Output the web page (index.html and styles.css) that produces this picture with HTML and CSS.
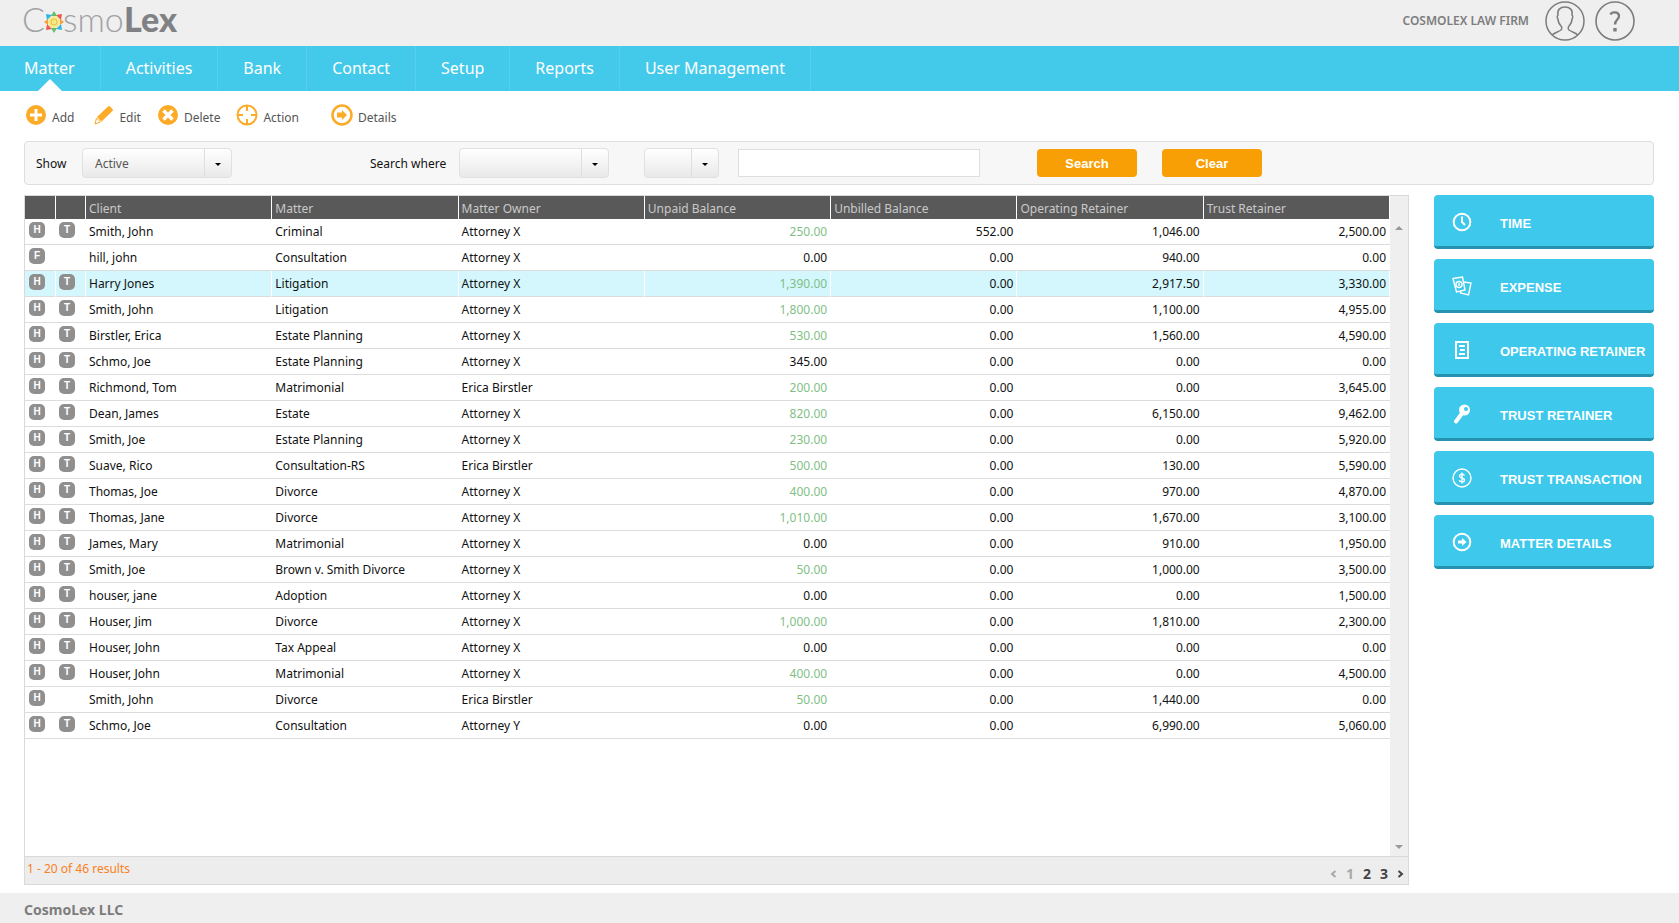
FILE: index.html
```html
<!DOCTYPE html>
<html lang="en">
<head>
    <meta charset="UTF-8">
    <meta name="viewport" content="width=device-width, initial-scale=1.0">
    <title>CosmoLex</title>
    <link rel="stylesheet" href="styles.css">
</head>
<body>
    <header class="top-bar">
        <a href="#" class="logo" aria-label="CosmoLex">
            <svg width="164" height="46" viewBox="-4 0 164 46">
                <text class="logo-light" x="-2" y="32">C</text>
                <g transform="translate(30 22)">
                    <circle r="6" fill="#f5ea8a"/>
                    <circle r="3" fill="none" stroke="#f0b94a"/>
                    <g fill="#5fbf6a"><path d="M-3-6L0-11l3 5zM-3 6L0 11l3-5z"/></g>
                    <g fill="#f5a03c"><path d="M-6-3L-10 0l4 3zM6-3L10 0 6 3z"/></g>
                    <g fill="#2fb4e8"><path d="M-8-8l6 1-5 5zM8 8l-6-1 5-5z"/></g>
                    <g fill="#ee5a4a"><path d="M8-8l-6 1 5 5zM-8 8l6-1-5-5z"/></g>
                </g>
                <text class="logo-light" x="39" y="32">smo</text>
                <text class="logo-bold" x="100" y="32">Lex</text>
            </svg>
        </a>
        <div class="account">
            <span class="firm">COSMOLEX LAW FIRM</span>
            <a href="#" aria-label="Profile">
                <svg width="40" height="40" viewBox="0 0 40 40" fill="none" stroke="#7d7d7d" stroke-width="1.500">
                    <circle cx="20" cy="20" r="19"/>
                    <path d="M7 34c2-2 6-3 9-5 1-1 1-3 0-4-2-2-3-5-3-7-1-1-1-3 0-4-1-5 2-8 7-8s8 3 7 8c1 1 1 3 0 4 0 2-1 5-3 7-1 1-1 3 0 4 3 2 7 3 9 5"/>
                </svg>
            </a>
            <a href="#" aria-label="Help">
                <svg width="40" height="40" viewBox="0 0 40 40" fill="none" stroke="#7d7d7d">
                    <circle cx="20" cy="20" r="19" stroke-width="1.600"/>
                    <path d="M15.500 13.500c1-3 8-3 8.500 1 .5 4-4 4-4 9" stroke-width="2.400"/>
                    <path d="M20 27v3.500" stroke-width="3.400"/>
                </svg>
            </a>
        </div>
    </header>

    <nav class="main-nav">
        <a href="#" class="active">Matter</a>
        <a href="#">Activities</a>
        <a href="#">Bank</a>
        <a href="#">Contact</a>
        <a href="#">Setup</a>
        <a href="#">Reports</a>
        <a href="#">User Management</a>
    </nav>

    <main>
        <div class="toolbar">
            <button type="button">
                <svg width="22" height="22" viewBox="0 0 22 22"><circle cx="11" cy="11" r="10" fill="#fbab26"/><path d="M11 5v12M5 11h12" stroke="#fff" stroke-width="3"/></svg>
                Add
            </button>
            <button type="button">
                <svg width="24" height="22" viewBox="-4 0 24 22" fill="#fbab26"><path d="M14 2.500q1-1 2 0l2.500 2.500q1 1 0 2L7.500 17.500 3 13z"/><path d="M2.500 14l4 4L1 20z" fill="#fff" stroke="#fbab26"/></svg>
                Edit
            </button>
            <button type="button">
                <svg width="22" height="22" viewBox="0 0 22 22"><circle cx="11" cy="11" r="10" fill="#fbab26"/><path d="M6.500 6.500l9 9M15.500 6.500l-9 9" stroke="#fff" stroke-width="3.400"/></svg>
                Delete
            </button>
            <button type="button" class="action">
                <svg width="22" height="22" viewBox="0 0 22 22" fill="none" stroke="#fbab26" stroke-width="2"><circle cx="11" cy="11" r="9.500"/><path d="M11 1v6M11 15v6M1 11h6M15 11h6"/></svg>
                Action
            </button>
            <button type="button">
                <svg width="22" height="22" viewBox="0 0 22 22" fill="#fbab26"><circle cx="11" cy="11" r="9.500" fill="none" stroke="#fbab26" stroke-width="2.500"/><path d="M6 8.500h5V6l5 5-5 5v-2.500H6z"/></svg>
                Details
            </button>
        </div>

        <form class="filter-bar" onsubmit="return false">
            <label for="show">Show</label>
            <span class="select wide">
                <select id="show"><option>Active</option><option>Closed</option></select>
            </span>
            <label for="field" class="where">Search where</label>
            <span class="select wide">
                <select id="field"><option></option><option>Client</option><option>Matter</option></select>
            </span>
            <span class="select narrow">
                <select aria-label="Operator"><option></option><option>=</option></select>
            </span>
            <input type="text" aria-label="Search text">
            <button type="submit">Search</button>
            <button type="reset">Clear</button>
        </form>

        <div class="content">
            <section class="panel">
                <div class="grid">
                    <div class="grid-body">
                        <table>
                            <colgroup>
                                <col class="col-first"><col class="col-icon">
                                <col><col><col><col><col><col><col>
                            </colgroup>
                            <thead>
                                <tr>
                                    <th></th><th></th><th>Client</th><th>Matter</th><th>Matter Owner</th>
                                    <th>Unpaid Balance</th><th>Unbilled Balance</th><th>Operating Retainer</th><th>Trust Retainer</th>
                                </tr>
                            </thead>
                            <tbody id="matters"></tbody>
                        </table>
                    </div>
                    <div class="scrollbar"><i class="up"></i><i class="down"></i></div>
                </div>
                <div class="pager">
                    <span class="results">1 - 20 of 46 results</span>
                    <div class="pages">
                        <a href="#" class="off" aria-label="Previous"><svg width="7" height="8" viewBox="0 0 7 8"><path d="M5.500 1L2 4l3.500 3"/></svg></a>
                        <a href="#" class="off">1</a>
                        <a href="#">2</a>
                        <a href="#">3</a>
                        <a href="#" aria-label="Next"><svg width="7" height="8" viewBox="0 0 7 8"><path d="M1.500 1L5 4 1.500 7"/></svg></a>
                    </div>
                </div>
            </section>

            <aside class="shortcuts">
                <button type="button">
                    <svg width="20" height="20" viewBox="0 0 20 20"><circle cx="10" cy="10" r="8.300"/><path d="M10 4.500V10l3 3"/></svg>
                    TIME
                </button>
                <button type="button">
                    <svg class="thin" width="20" height="20" viewBox="0 0 20 20"><path d="M1 2.500L10.500 1l2.500 13-8.500 2z"/><path d="M12 6l7 1-2.500 12-8-2 .3-2"/><circle cx="7" cy="8.500" r="3"/><path d="M7 7v3"/></svg>
                    EXPENSE
                </button>
                <button type="button">
                    <svg width="20" height="20" viewBox="0 0 20 20"><rect x="4" y="2" width="12" height="16"/><path d="M7 6h6M8 10h5M7 14h6"/></svg>
                    OPERATING RETAINER
                </button>
                <button type="button">
                    <svg width="20" height="20" viewBox="0 0 20 20"><circle cx="12.500" cy="6" r="5.500" fill="#fff" stroke="none"/><circle cx="14" cy="5" r="2" fill="#3dc8ec" stroke="none"/><path class="shaft" d="M10 9.500l-6 8"/></svg>
                    TRUST RETAINER
                </button>
                <button type="button">
                    <svg class="thin" width="20" height="20" viewBox="0 0 20 20"><circle cx="10" cy="10" r="9"/><path d="M12.500 7.500c-1-2-5-1.500-5 .5 0 2.500 5 1.500 5 4s-4.500 2.500-5.300.3M10 4.500v11"/></svg>
                    TRUST TRANSACTION
                </button>
                <button type="button">
                    <svg width="20" height="20" viewBox="0 0 20 20"><circle cx="10" cy="10" r="8.300"/><path d="M6 8.500h4V6l4.500 4-4.500 4v-2.500H6z" fill="#fff" stroke="none"/></svg>
                    MATTER DETAILS
                </button>
            </aside>
        </div>
    </main>

    <footer>CosmoLex LLC</footer>

    <script>
    // badges, client, matter, owner, unpaid, unbilled, operating, trust
    const matters = [
        ['HT', 'Smith, John', 'Criminal', 'Attorney X', '250.00', '552.00', '1,046.00', '2,500.00'],
        ['F', 'hill, john', 'Consultation', 'Attorney X', '0.00', '0.00', '940.00', '0.00'],
        ['HT', 'Harry Jones', 'Litigation', 'Attorney X', '1,390.00', '0.00', '2,917.50', '3,330.00'],
        ['HT', 'Smith, John', 'Litigation', 'Attorney X', '1,800.00', '0.00', '1,100.00', '4,955.00'],
        ['HT', 'Birstler, Erica', 'Estate Planning', 'Attorney X', '530.00', '0.00', '1,560.00', '4,590.00'],
        ['HT', 'Schmo, Joe', 'Estate Planning', 'Attorney X', '345.00', '0.00', '0.00', '0.00'],
        ['HT', 'Richmond, Tom', 'Matrimonial', 'Erica Birstler', '200.00', '0.00', '0.00', '3,645.00'],
        ['HT', 'Dean, James', 'Estate', 'Attorney X', '820.00', '0.00', '6,150.00', '9,462.00'],
        ['HT', 'Smith, Joe', 'Estate Planning', 'Attorney X', '230.00', '0.00', '0.00', '5,920.00'],
        ['HT', 'Suave, Rico', 'Consultation-RS', 'Erica Birstler', '500.00', '0.00', '130.00', '5,590.00'],
        ['HT', 'Thomas, Joe', 'Divorce', 'Attorney X', '400.00', '0.00', '970.00', '4,870.00'],
        ['HT', 'Thomas, Jane', 'Divorce', 'Attorney X', '1,010.00', '0.00', '1,670.00', '3,100.00'],
        ['HT', 'James, Mary', 'Matrimonial', 'Attorney X', '0.00', '0.00', '910.00', '1,950.00'],
        ['HT', 'Smith, Joe', 'Brown v. Smith Divorce', 'Attorney X', '50.00', '0.00', '1,000.00', '3,500.00'],
        ['HT', 'houser, jane', 'Adoption', 'Attorney X', '0.00', '0.00', '0.00', '1,500.00'],
        ['HT', 'Houser, Jim', 'Divorce', 'Attorney X', '1,000.00', '0.00', '1,810.00', '2,300.00'],
        ['HT', 'Houser, John', 'Tax Appeal', 'Attorney X', '0.00', '0.00', '0.00', '0.00'],
        ['HT', 'Houser, John', 'Matrimonial', 'Attorney X', '400.00', '0.00', '0.00', '4,500.00'],
        ['H', 'Smith, John', 'Divorce', 'Erica Birstler', '50.00', '0.00', '1,440.00', '0.00'],
        ['HT', 'Schmo, Joe', 'Consultation', 'Attorney Y', '0.00', '0.00', '6,990.00', '5,060.00']
    ];
    const selected = 2;
    // balances that cannot be covered from a retainer stay black
    const uncovered = ['0.00', '345.00'];

    document.getElementById('matters').innerHTML = matters.map(function(row, i) {
        const badge = c => '<td>' + (c ? '<span class="badge">' + c + '</span>' : '') + '</td>';
        const cells = row.slice(1).map(function(value, n) {
            if (n < 3) return '<td>' + value + '</td>';
            const due = n === 3 && !uncovered.includes(value);
            return '<td class="num' + (due ? ' due' : '') + '">' + value + '</td>';
        });
        return '<tr' + (i === selected ? ' class="selected"' : '') + '>' + badge(row[0][0]) + badge(row[0][1]) + cells.join('') + '</tr>';
    }).join('');
    </script>
</body>
</html>
```
FILE: styles.css
```css
* {
    box-sizing: border-box;
}

body {
    margin: 0;
    min-height: 100vh;
    display: flex;
    flex-direction: column;
    font-family: "Segoe UI", "Noto Sans", "Open Sans", sans-serif;
    font-size: 12px;
    color: #111;
    background: #fff;
}

a {
    color: inherit;
    text-decoration: none;
}

button, input, select {
    font-family: inherit;
    font-size: inherit;
}

button {
    cursor: pointer;
    border: none;
}

svg {
    display: block;
    flex: none;
}

.top-bar {
    display: flex;
    justify-content: space-between;
    height: 46px;
    padding: 0 44px 0 20px;
    background: #efefef;
}

.logo svg {
    overflow: visible;
}

.logo-light {
    font: 300 34px Lato, sans-serif;
    fill: #a2a2a4;
}

.logo-bold {
    font: 900 34px Lato, sans-serif;
    fill: #808184;
}

.account {
    display: flex;
    align-items: flex-start;
    gap: 10px;
    padding-top: 1px;
}

.firm {
    margin-right: 6px;
    line-height: 40px;
    font-weight: 600;
    color: #7d7d7d;
}

.main-nav {
    display: flex;
    height: 45px;
    background: #43c9ea;
}

.main-nav a {
    position: relative;
    padding: 0 25px;
    border-right: 1px solid #55cfed;
    font-size: 16px;
    line-height: 44px;
    color: #fff;
}

.main-nav .active {
    padding-left: 24px;
}

.main-nav .active::after {
    content: "";
    position: absolute;
    left: 38px;
    bottom: 0;
    border: 12px solid transparent;
    border-top: none;
    border-bottom-color: #fff;
}

main {
    flex: 1;
    display: flex;
    flex-direction: column;
    padding: 0 25px 8px 24px;
}

.toolbar {
    display: flex;
    align-items: center;
    gap: 14px;
    height: 50px;
    padding-top: 2px;
}

.toolbar button {
    display: flex;
    align-items: center;
    gap: 5px;
    padding: 0 1px;
    background: none;
    color: #555;
}

.toolbar svg {
    margin-bottom: 4px;
}

.toolbar .action {
    margin-right: 16px;
}

.filter-bar {
    display: flex;
    align-items: center;
    height: 44px;
    margin-bottom: 10px;
    padding: 0 11px;
    border: 1px solid #dedede;
    border-radius: 4px;
    background: #f7f7f7;
}

.filter-bar label {
    width: 46px;
}

.filter-bar .where {
    width: 89px;
    margin-left: 138px;
}

.select {
    position: relative;
    height: 30px;
    border: 1px solid #e0e0e0;
    border-radius: 4px;
    background: linear-gradient(#fff, #e9e9e9);
}

.select.wide {
    width: 150px;
}

.select.narrow {
    width: 75px;
    margin: 0 19px 0 35px;
}

.select select {
    appearance: none;
    width: 100%;
    height: 100%;
    padding: 0 30px 0 12px;
    border: none;
    background: none;
    color: #555;
}

.select::before {
    content: "";
    position: absolute;
    top: 0;
    bottom: 0;
    right: 26px;
    border-left: 1px solid #dedede;
}

.select::after {
    content: "";
    position: absolute;
    top: 14px;
    right: 10px;
    border: 3px solid transparent;
    border-top-color: #000;
    border-bottom: none;
}

.filter-bar input {
    width: 242px;
    height: 28px;
    margin-right: 57px;
    padding: 0 6px;
    border: 1px solid #dedede;
    background: #fff;
}

.filter-bar button {
    width: 100px;
    height: 28px;
    margin-right: 25px;
    border-radius: 4px;
    background: #f79f05;
    color: #fff;
    font: bold 13px "Liberation Sans", Arial, sans-serif;
}

.content {
    flex: 1;
    display: flex;
    gap: 25px;
}

.panel {
    flex: 1;
    display: flex;
    flex-direction: column;
    border: 1px solid #d9d9d9;
}

.grid {
    flex: 1;
    display: flex;
}

.grid-body {
    flex: 1;
}

table {
    width: 100%;
    table-layout: fixed;
    border-collapse: separate;
    border-spacing: 0;
}

.col-first {
    width: 31px;
}

.col-icon {
    width: 30px;
}

th {
    height: 23px;
    padding: 2px 3px 0;
    border-right: 1px solid #fff;
    background: #595959;
    color: #c9c9c9;
    font-weight: normal;
    text-align: left;
}

td {
    height: 26px;
    padding: 0 3px;
    border-bottom: 1px solid #dcdcdc;
    white-space: nowrap;
}

td:first-child {
    padding-left: 4px;
}

.selected td {
    border-right: 1px solid #fff;
    background: #d3f7fd;
}

.num {
    padding-right: 4px;
    text-align: right;
}

.selected .num {
    padding-right: 3px;
}

.due {
    color: #7fbf86;
}

.badge {
    display: block;
    width: 16px;
    height: 16px;
    margin-bottom: 3px;
    border-radius: 5px;
    background: #8f8f8f;
    color: #fff;
    font: bold 10px/16px "Liberation Sans", Arial, sans-serif;
    text-align: center;
}

.scrollbar {
    display: flex;
    flex-direction: column;
    justify-content: space-between;
    align-items: center;
    width: 18px;
    padding: 30px 0 7px;
    background: #efefef;
}

.scrollbar i {
    border: 4px solid transparent;
}

.scrollbar .up {
    border-top: none;
    border-bottom-color: #999;
}

.scrollbar .down {
    border-bottom: none;
    border-top-color: #999;
}

.pager {
    display: flex;
    justify-content: space-between;
    height: 28px;
    padding: 0 4px 0 2px;
    border-top: 1px solid #d9d9d9;
    background: #ededed;
}

.results {
    line-height: 24px;
    color: #fb8020;
}

.pages {
    display: flex;
    align-items: center;
    gap: 9px;
    padding-top: 6px;
    font-size: 14px;
    font-weight: bold;
    color: #444;
}

.pages svg {
    fill: none;
    stroke: currentColor;
    stroke-width: 2;
}

.pages .off {
    color: #a8a8a8;
}

.shortcuts {
    display: flex;
    flex-direction: column;
    gap: 10px;
    width: 220px;
}

.shortcuts button {
    display: flex;
    align-items: center;
    gap: 28px;
    height: 54px;
    padding: 6px 0 0 18px;
    border-bottom: 3px solid #2592b0;
    border-radius: 4px;
    background: #3dc8ec;
    color: #fff;
    font: bold 13px "Liberation Sans", Arial, sans-serif;
    white-space: nowrap;
}

.shortcuts svg {
    margin-bottom: 4px;
    fill: none;
    stroke: #fff;
    stroke-width: 2;
}

.shortcuts .thin {
    stroke-width: 1.4;
}

.shortcuts .shaft {
    stroke-width: 4;
    stroke-linecap: round;
}

footer {
    height: 30px;
    padding-left: 24px;
    background: #efefef;
    color: #7d7d7d;
    font-size: 14px;
    font-weight: bold;
    line-height: 34px;
}
```
